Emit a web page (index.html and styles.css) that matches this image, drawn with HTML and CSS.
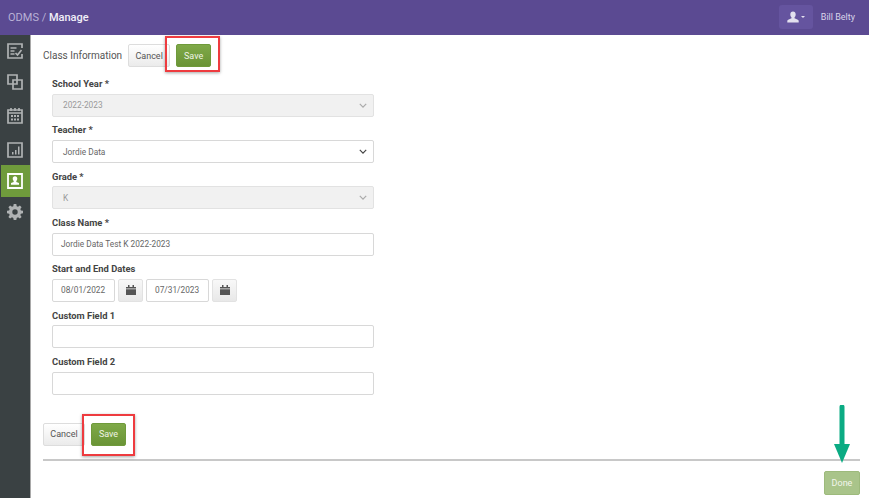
FILE: index.html
```html
<!DOCTYPE html>
<html lang="en">
<head>
<meta charset="utf-8">
<title>ODMS / Manage</title>
<link rel="stylesheet" href="styles.css">
</head>
<body>
<header class="topbar">
  <div class="crumb"><span class="crumb-muted">ODMS / </span><span class="crumb-current">Manage</span></div>
  <div class="user">
    <div class="user-btn">
      <svg class="user-icon" viewBox="0 0 12 12"><path d="M6 .5c1.700 0 2.700 1.300 2.700 3 0 1.200-.5 2.300-1.200 2.900v.9l3.300 1.500c.6.3.9.7.9 1.300v1.400H.3v-1.400c0-.6.3-1 .9-1.300l3.300-1.500v-.9C3.800 5.800 3.300 4.700 3.300 3.500c0-1.700 1-3 2.700-3z"/></svg>
      <span class="caret"></span>
    </div>
    <span class="user-name">Bill Belty</span>
  </div>
</header>
<div class="body">
  <nav class="sidebar">
    <div class="nav-item n1"><svg viewBox="0 0 16 16"><path class="st" d="M15 5V1H1v14h14v-4"/><path class="st" d="M3.500 5h6M3.500 8h4M3.500 11h4M8.500 10l2 2 4-5"/></svg></div>
    <div class="nav-item n2"><svg viewBox="0 0 16 16"><path class="st" d="M1 1h9v9H1zM6 6h9v9H6z"/></svg></div>
    <div class="nav-item n3"><svg viewBox="0 0 16 16"><path class="st" d="M1 2h14v13H1z"/><path class="st" d="M1 5h14M4 0v3M8 0v3M12 0v3"/><path class="fl" d="M4 7h2v2H4zM7 7h2v2H7zM10 7h2v2h-2zM4 10.500h2v2H4zM7 10.500h2v2H7zM10 10.500h2v2h-2z"/></svg></div>
    <div class="nav-item n4"><svg viewBox="0 0 16 16"><path class="st" d="M1 1h14v14H1z"/><path class="fl" d="M5 10h1.500v2.500H5zM8 8h1.500v4.500H8zM11 4.500h1.500v8H11z"/></svg></div>
    <div class="nav-item active"><svg viewBox="0 0 16 16"><path class="st-w" d="M1 1h14v14H1z"/><path class="fl-w" d="M8 3.300c1.500 0 2.300 1.100 2.300 2.500 0 1-.4 1.800-1 2.300v.8l2.700 1.200v1.600H4v-1.600l2.700-1.200v-.8c-.6-.5-1-1.300-1-2.300 0-1.400.8-2.500 2.300-2.500z"/></svg></div>
    <div class="nav-item n6"><svg viewBox="0 0 16 16"><path class="fl" fill-rule="evenodd" d="M6.700 0h2.600l.4 2.200 1.300.6L12.900 1.500l1.700 1.700-1.300 1.900.6 1.300 2.100.4v2.500l-2.100.4-.6 1.300 1.300 1.900-1.700 1.700-1.900-1.300-1.300.6-.4 2.100H6.700l-.4-2.100-1.300-.6-1.900 1.300-1.700-1.700 1.300-1.900-.6-1.300L0 9.300V6.800l2.100-.4.6-1.300-1.300-1.900 1.700-1.700L5 2.800l1.300-.6zM8 5.300a2.700 2.700 0 1 0 0 5.400 2.700 2.700 0 0 0 0-5.400z"/></svg></div>
  </nav>
  <main class="content">
    <div class="action-row top">
      <span class="section-title">Class Information</span>
      <button class="btn btn-default">Cancel</button>
      <span class="marked marked-top"><button class="btn btn-save">Save</button><span class="red-box"></span></span>
    </div>
    <form class="form">
      <div class="field"><label class="label">School Year *</label><div class="control disabled select">2022-2023<svg class="chev" viewBox="0 0 10 6"><path d="M1 1l4 4 4-4"/></svg></div></div>
      <div class="field"><label class="label">Teacher *</label><div class="control select">Jordie Data<svg class="chev dark" viewBox="0 0 10 6"><path d="M1 1l4 4 4-4"/></svg></div></div>
      <div class="field"><label class="label">Grade *</label><div class="control disabled select">K<svg class="chev" viewBox="0 0 10 6"><path d="M1 1l4 4 4-4"/></svg></div></div>
      <div class="field"><label class="label">Class Name *</label><div class="control">Jordie Data Test K 2022-2023</div></div>
      <div class="field"><label class="label">Start and End Dates</label>
        <div class="dates">
          <div class="control date">08/01/2022</div>
          <div class="cal-btn"><svg viewBox="0 0 12 12"><path d="M1 3h10v1.500H1zM1 5.300h10V11H1zM3 1h1.500v2H3zM7.500 1H9v2H7.500z"/></svg></div>
          <div class="control date">07/31/2023</div>
          <div class="cal-btn"><svg viewBox="0 0 12 12"><path d="M1 3h10v1.500H1zM1 5.300h10V11H1zM3 1h1.500v2H3zM7.500 1H9v2H7.500z"/></svg></div>
        </div>
      </div>
      <div class="field"><label class="label">Custom Field 1</label><div class="control"></div></div>
      <div class="field"><label class="label">Custom Field 2</label><div class="control"></div></div>
    </form>
    <div class="action-row bottom">
      <button class="btn btn-default">Cancel</button>
      <span class="marked marked-bottom"><button class="btn btn-save">Save</button><span class="red-box"></span></span>
    </div>
    <hr class="rule">
    <div class="footer"><button class="btn btn-done">Done</button></div>
    <svg class="arrow" viewBox="0 0 16 58"><path d="M8 2v40" class="arrow-line"/><path d="M0 39h16l-8 19z" class="arrow-head"/></svg>
  </main>
</div>
</body>
</html>
```
FILE: styles.css
```css
* { box-sizing: border-box; }
html, body { margin: 0; padding: 0; height: 100%; }
body {
  width: 869px;
  height: 498px;
  overflow: hidden;
  display: flex;
  flex-direction: column;
  font-family: Roboto, "Liberation Sans", sans-serif;
  font-size: 9px;
  color: #555;
  background: #fff;
}
.topbar {
  height: 35px;
  flex: none;
  background: #5b4a92;
  display: flex;
  align-items: center;
  justify-content: space-between;
  padding: 0 14px 1px 8px;
}
.crumb { font-size: 11px; }
.crumb-muted { color: #b9b1d6; }
.crumb-current { color: #f1eff8; font-weight: 500; }
.user { display: flex; align-items: center; gap: 8px; }
.user-btn {
  width: 34px;
  height: 24px;
  background: #65549f;
  border-radius: 3px;
  display: flex;
  align-items: center;
  justify-content: center;
  gap: 2px;
}
.user-icon { width: 12px; height: 12px; fill: #e3e0ef; }
.caret {
  width: 0; height: 0;
  border-left: 2px solid transparent;
  border-right: 2px solid transparent;
  border-top: 2px solid #e3e0ef;
}
.user-name { color: #d9d5ea; font-size: 9px; }
.body { flex: 1; display: flex; min-height: 0; }
.sidebar {
  width: 30px;
  flex: none;
  background: #3a4143;
  display: flex;
  flex-direction: column;
  align-items: stretch;
  padding: 0 0 0 1px;
}
.nav-item { display: flex; align-items: center; justify-content: center; padding-right: 1px; }
.nav-item svg { width: 16px; height: 16px; }
.n1 { height: 31px; }
.n2 { height: 31px; }
.n3 { height: 38px; }
.n4 { height: 30px; }
.active { height: 32px; background: #6f9b3c; }
.n6 { height: 30px; }
.st { fill: none; stroke: #b0b3b4; stroke-width: 1.700; }
.fl { fill: #b0b3b4; }
.st-w { fill: none; stroke: #fff; stroke-width: 1.800; }
.fl-w { fill: #fff; }
.content { flex: 1; position: relative; padding: 9px 9px 0 13px; min-width: 0; border-left: 1px solid #a9a9a9; padding-left: 12px; }
.action-row { display: flex; align-items: center; }
.action-row.top { height: 23px; }
.section-title { font-size: 10px; color: #555; margin-right: 6px; }
.btn {
  height: 23px;
  font: inherit;
  font-size: 9px;
  border-radius: 2px;
  padding: 0;
  cursor: pointer;
}
.btn-default {
  width: 42px;
  background: linear-gradient(#fff, #ebebeb);
  border: 1px solid #ddd;
  color: #555;
}
.btn-save {
  width: 35px;
  background: linear-gradient(#7fa948, #6a9436);
  border: 1px solid #6f9a3b;
  color: #eef3e4;
  display: block;
}
.marked { position: relative; margin-left: 6px; display: block; }
.red-box {
  position: absolute;
  border: 2px solid #ee3b3f;
  box-shadow: 0 1px 3px rgba(0,0,0,.35);
  pointer-events: none;
}
.marked-top .red-box { left: -11px; top: -8px; width: 55px; height: 36px; }
.marked-bottom .red-box { left: -9px; top: -9px; width: 53px; height: 42px; }
.form { padding: 9.800px 0 0 9px; width: 331px; }
.field { height: 46.300px; }
.label { display: block; height: 17px; padding-top: 1.400px; font-size: 9.400px; font-weight: 700; color: #444; line-height: 12px; }
.control {
  height: 23px;
  border: 1px solid #d8d8d8;
  border-radius: 2px;
  padding: 0 8px;
  display: flex;
  align-items: center;
  color: #666;
  font-size: 8.300px;
  background: #fff;
}
.disabled { background: #f1f1f1; color: #999; border-color: #e2e2e2; }
.select { justify-content: space-between; padding: 0 6px 0 10px; }
.chev { width: 8px; height: 5px; fill: none; stroke: #aaa; stroke-width: 1.500; }
.chev.dark { stroke: #444; }
.dates { display: flex; gap: 3px; }
.date { width: 63px; }
.cal-btn {
  width: 25px;
  height: 23px;
  background: linear-gradient(#f8f8f8, #e8e8e8);
  border: 1px solid #e2e2e2;
  border-radius: 2px;
  display: flex;
  align-items: center;
  justify-content: center;
}
.cal-btn svg { width: 12px; height: 12px; fill: #555; }
.action-row.bottom { margin-top: 22px; height: 23px; }
.rule { border: 0; height: 2px; background: #c8c8c8; margin: 13px 0 0 0; }
.footer { display: flex; justify-content: flex-end; margin-top: 10px; }
.btn-done {
  width: 36px;
  height: 24px;
  background: #a9c48a;
  border: 1px solid #9dba7c;
  color: #f2f6ec;
}
.arrow { position: absolute; left: 803px; top: 370px; width: 16px; height: 58px; }
.arrow-line { stroke: #0bab83; stroke-width: 5; stroke-linecap: round; fill: none; }
.arrow-head { fill: #0bab83; }
```
